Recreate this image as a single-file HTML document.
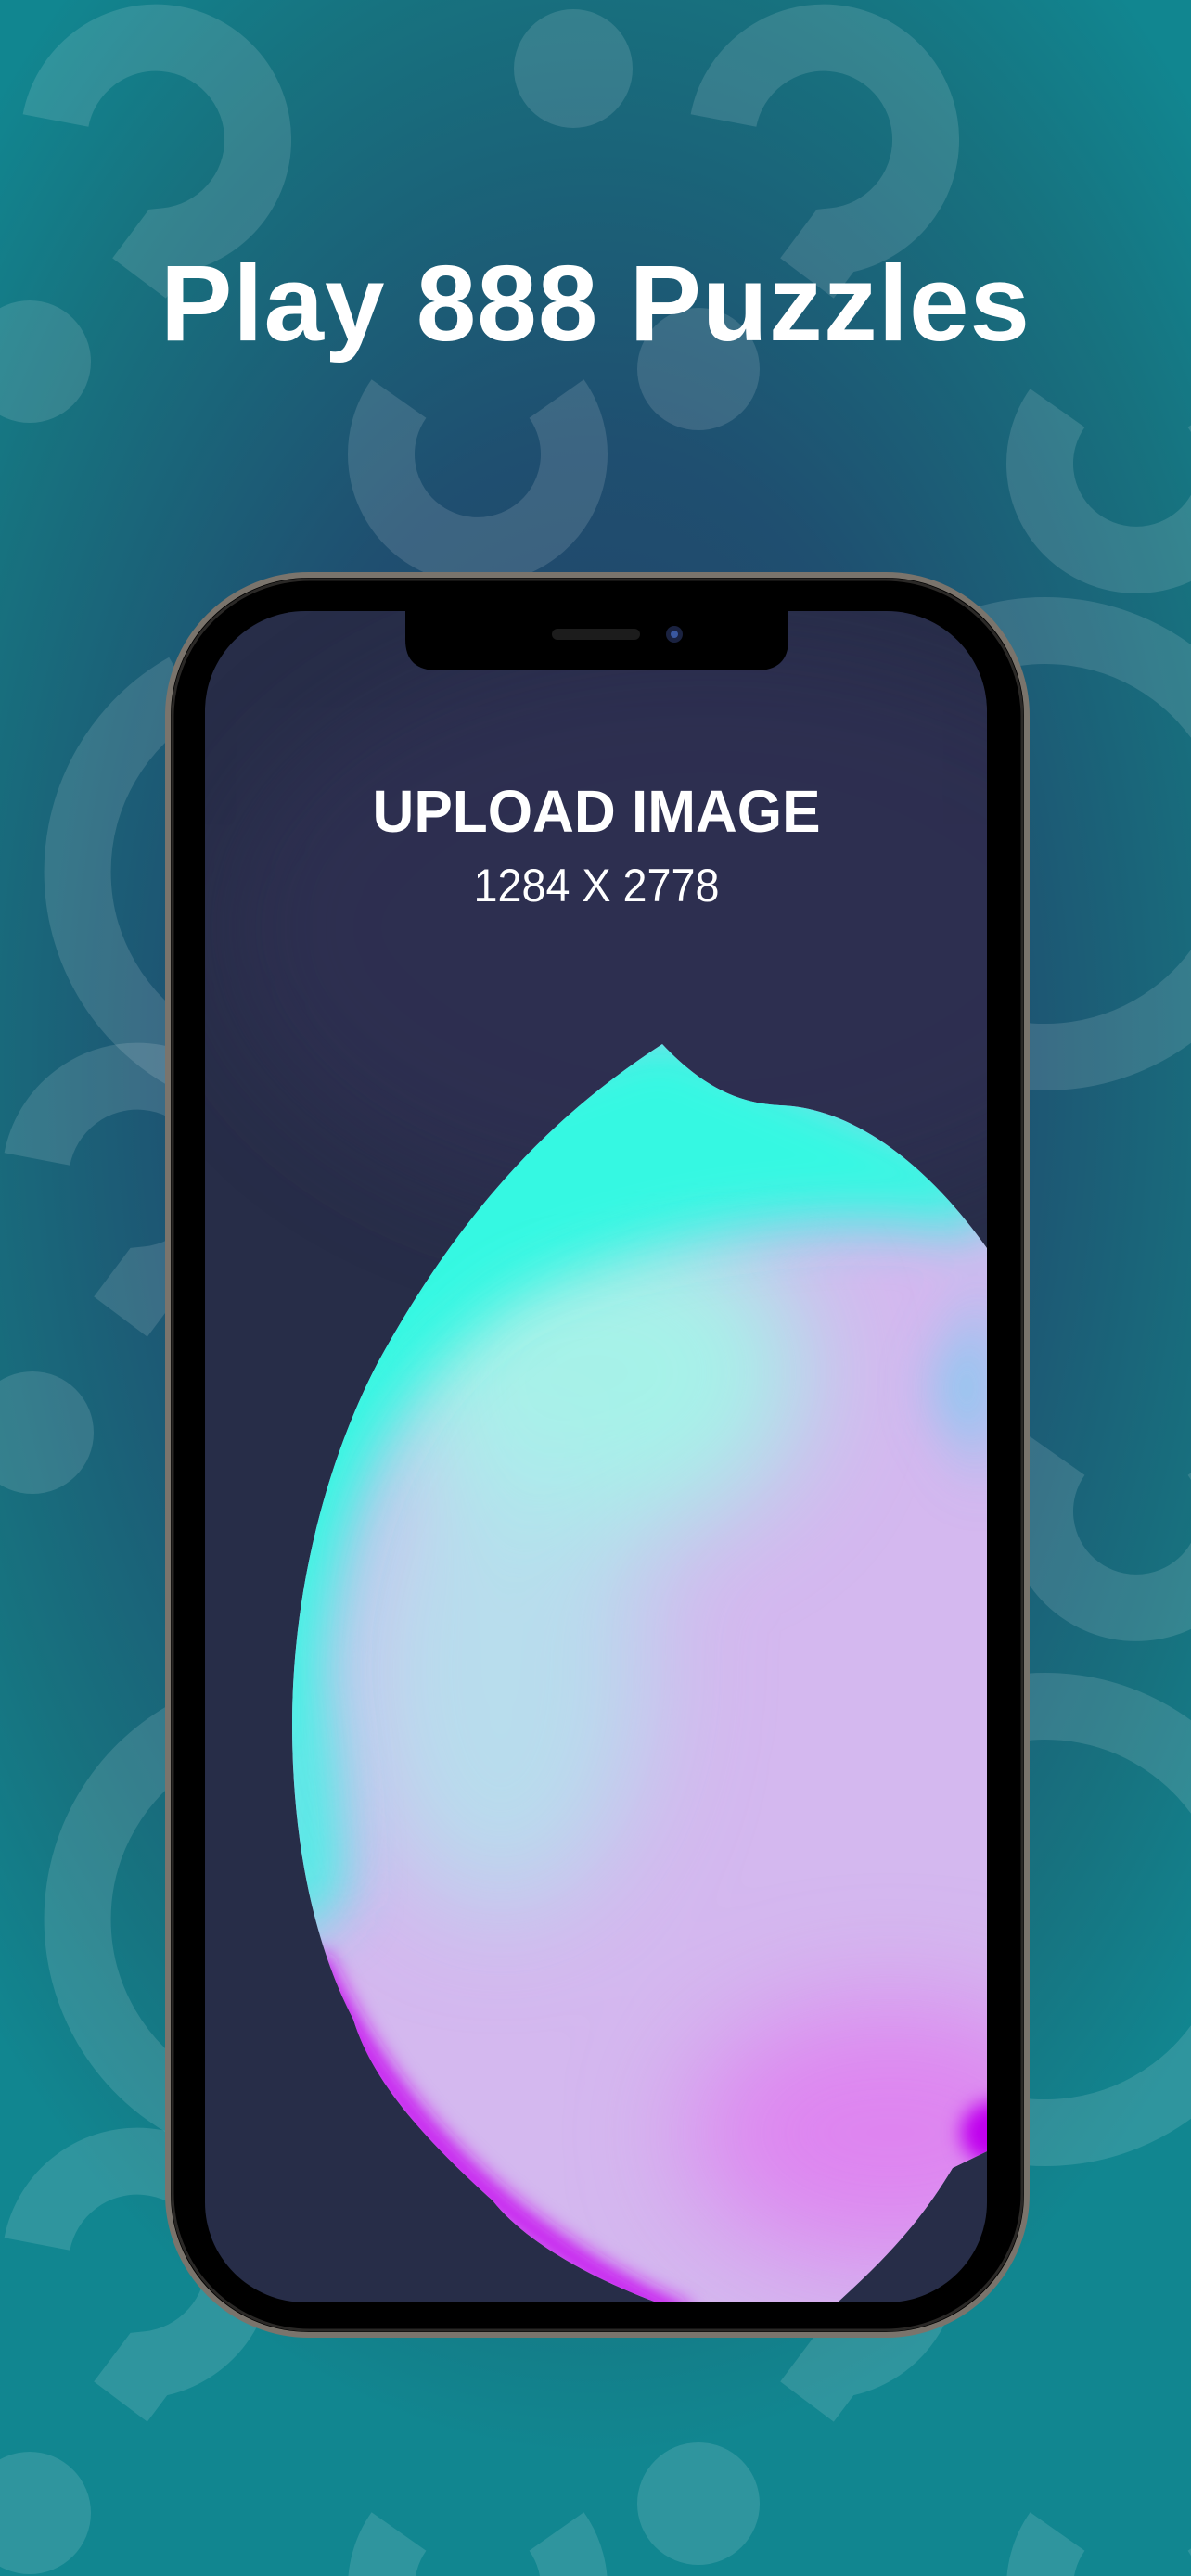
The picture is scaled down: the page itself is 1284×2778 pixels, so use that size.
<!DOCTYPE html>
<html><head><meta charset="utf-8"><style>
html,body{margin:0;padding:0}
body{width:1284px;height:2778px;overflow:hidden;position:relative;font-family:"Liberation Sans",sans-serif;
background:radial-gradient(ellipse 900px 1500px at 640px 1150px,#233a62 0%,#1f4f70 45%,#17727f 80%,#118690 100%);}
svg{position:absolute;left:0;top:0}
.title{position:absolute;left:0;width:1284px;top:262px;text-align:center;color:#fff;font-weight:bold;font-size:116px;letter-spacing:1px;line-height:130px}
</style></head><body>
<svg width="1284" height="2778" viewBox="0 0 1284 2778">
<g fill="none" stroke="#ffffff" stroke-opacity="0.13" stroke-width="72">
<path d="M60 130 A110 110 0 1 1 180 260 L150 300"/>
<path d="M780 130 A110 110 0 1 1 900 260 L870 300"/>
<path d="M430 430 A104 104 0 1 0 600 430"/>
<path d="M1140 440 A104 104 0 1 0 1310 440"/>
<path d="M1060 690 A230 230 0 1 1 1060 1130"/>
<path d="M200 740 A230 230 0 0 0 200 1140"/>
<path d="M40 1250 A110 110 0 1 1 160 1380 L130 1420"/>
<path d="M1140 1570 A104 104 0 1 0 1310 1570"/>
<path d="M1060 1850 A230 230 0 1 1 1060 2290"/>
<path d="M200 1870 A230 230 0 0 0 200 2270"/>
<path d="M40 2420 A110 110 0 1 1 160 2550 L130 2590"/>
<path d="M780 2420 A110 110 0 1 1 900 2550 L870 2590"/>
<path d="M430 2730 A104 104 0 1 0 600 2730"/>
<path d="M1140 2730 A104 104 0 1 0 1310 2730"/>
</g>
<g fill="#ffffff" fill-opacity="0.13">
<circle cx="618" cy="74" r="64"/><circle cx="32" cy="390" r="66"/><circle cx="753" cy="398" r="66"/>
<circle cx="35" cy="1545" r="66"/><circle cx="32" cy="2710" r="66"/><circle cx="753" cy="2700" r="66"/>
</g>
<defs>
<clipPath id="scr"><rect x="221" y="659" width="843" height="1824" rx="108"/></clipPath>
<clipPath id="blob"><path d="M714 1126 C760 1175 800 1190 841 1192 C930 1195 1010 1270 1064 1346 L1064 2320 L1027 2338 C990 2400 950 2440 903 2483 L708 2483 C620 2450 560 2410 531 2373 C450 2300 400 2240 381 2178 C330 2080 315 1960 315 1860 C315 1700 360 1560 407 1470 C500 1300 600 1200 714 1126 Z"/></clipPath>
<filter id="blur" x="-50%" y="-50%" width="200%" height="200%"><feGaussianBlur stdDeviation="30"/></filter>
<filter id="blur3" x="-50%" y="-50%" width="200%" height="200%"><feGaussianBlur stdDeviation="10"/></filter>
<filter id="blur2" x="-50%" y="-50%" width="200%" height="200%"><feGaussianBlur stdDeviation="60"/></filter>
</defs>
<rect x="181" y="620" width="926" height="1898" rx="152" fill="#000" stroke="#7a746c" stroke-width="6"/>
<rect x="186" y="625" width="916" height="1888" rx="148" fill="none" stroke="#2a2826" stroke-width="3"/>
<g clip-path="url(#scr)">
<rect x="221" y="659" width="843" height="1824" fill="#272d48"/>
<ellipse cx="760" cy="1000" rx="520" ry="320" fill="#34305a" opacity="0.45" filter="url(#blur2)"/>
<g clip-path="url(#blob)">
<rect x="221" y="1100" width="843" height="1400" fill="#d4b8ef"/>
<g filter="url(#blur2)">
<ellipse cx="640" cy="1480" rx="230" ry="180" fill="#a6f2e8"/>
<ellipse cx="540" cy="1800" rx="160" ry="260" fill="#b0e6ec" opacity="0.8"/>
<ellipse cx="960" cy="2300" rx="220" ry="140" fill="#de84f0"/>
</g>
<g filter="url(#blur)">
<path d="M300 1250 L714 1100 L1064 1250 L1064 1330 C900 1300 700 1330 560 1400 C440 1480 370 1600 350 1800 L250 1900 Z" fill="#36f8e2"/>
<path d="M280 1650 C330 1650 360 1800 370 2050 L300 2100 Z" fill="#40f4e4"/>
<path d="M1064 1380 L1010 1500 L1064 1600 Z" fill="#70cff0"/>
</g>
<g filter="url(#blur3)" fill="none">
<path d="M340 2110 C420 2290 560 2420 740 2500" stroke="#c814f0" stroke-width="26"/>
</g>
<g filter="url(#blur3)">
<ellipse cx="1072" cy="2300" rx="36" ry="34" fill="#c000ee"/>
</g>
</g>
</g>
<path d="M437 659 L437 690 Q437 723 472 723 L815 723 Q850 723 850 690 L850 659 Z" fill="#000"/>
<rect x="595" y="678" width="95" height="12" rx="6" fill="#1c1c1c"/>
<circle cx="727" cy="684" r="9" fill="#1a2240"/><circle cx="727" cy="684" r="4" fill="#3a58a0"/>
<text x="643" y="897" text-anchor="middle" fill="#fff" font-family="Liberation Sans" font-weight="bold" font-size="64" textLength="483" lengthAdjust="spacingAndGlyphs">UPLOAD IMAGE</text>
<text x="643" y="972" text-anchor="middle" fill="#fff" font-family="Liberation Sans" font-size="50" textLength="265" lengthAdjust="spacingAndGlyphs">1284 X 2778</text>
</svg>
<div class="title">Play 888 Puzzles</div>
</body></html>
